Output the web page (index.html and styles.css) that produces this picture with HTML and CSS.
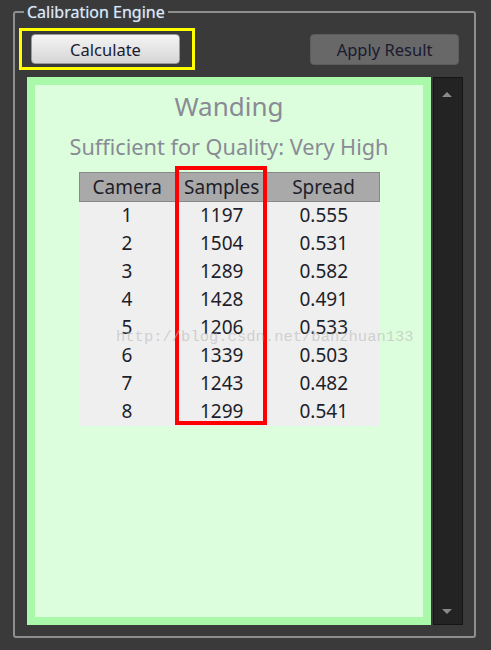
FILE: index.html
```html
<!DOCTYPE html>
<html lang="en">
<head>
    <meta charset="UTF-8">
    <meta name="viewport" content="width=device-width, initial-scale=1.0">
    <title>Calibration Engine</title>
    <link rel="stylesheet" href="styles.css">
</head>
<body>
    <!-- Group box -->
    <fieldset class="group">
        <legend>Calibration Engine</legend>

        <!-- Toolbar -->
        <div class="toolbar">
            <div class="highlight">
                <button class="btn btn-light">Calculate</button>
            </div>
            <button class="btn btn-dark">Apply Result</button>
        </div>

        <!-- Results panel -->
        <div class="panel-row">
            <div class="panel">
                <div class="panel-inner">
                    <div class="title">Wanding</div>
                    <div class="subtitle">Sufficient for Quality: Very High</div>

                    <div class="table-wrap">
                        <table class="results">
                            <thead>
                                <tr>
                                    <th class="col-cam">Camera</th>
                                    <th class="col-samples">Samples</th>
                                    <th class="col-spread">Spread</th>
                                </tr>
                            </thead>
                            <tbody>
                                <tr><td>1</td><td>1197</td><td>0.555</td></tr>
                                <tr><td>2</td><td>1504</td><td>0.531</td></tr>
                                <tr><td>3</td><td>1289</td><td>0.582</td></tr>
                                <tr><td>4</td><td>1428</td><td>0.491</td></tr>
                                <tr><td>5</td><td>1206</td><td>0.533</td></tr>
                                <tr><td>6</td><td>1339</td><td>0.503</td></tr>
                                <tr><td>7</td><td>1243</td><td>0.482</td></tr>
                                <tr><td>8</td><td>1299</td><td>0.541</td></tr>
                            </tbody>
                        </table>
                        <!-- red annotation round the Samples column -->
                        <div class="mark"></div>
                    </div>
                </div>
                <div class="watermark">http://blog.csdn.net/banzhuan133</div>
            </div>

            <!-- Scrollbar -->
            <div class="scrollbar">
                <span class="arrow arrow-up"></span>
                <span class="arrow arrow-down"></span>
            </div>
        </div>
    </fieldset>
</body>
</html>
```
FILE: styles.css
```css
/* Basic Reset */
body, fieldset, legend, table, button {
    margin: 0;
    padding: 0;
    box-sizing: border-box;
}

body {
    width: 491px;
    height: 650px;
    background-color: #3a3a3a;
    font-family: "Noto Sans", sans-serif;
    overflow: hidden;
}

/* Group box */
.group {
    margin: 2px 15px 0 13px;
    height: 636px;
    border: 2px solid #8e8e8e;
    border-radius: 3px;
    padding: 0 0 11px 0;
    display: flex;
    flex-direction: column;
}

.group legend {
    margin-left: 9px;
    padding: 0 3px;
    height: 20px;
    line-height: 20px;
    font-size: 16px;
    color: #dfe8f2;
    text-shadow: 0 0 1px #7fa0c8;
}

/* Toolbar */
.toolbar {
    display: flex;
    justify-content: space-between;
    align-items: center;
    margin-top: 6px;
    padding: 0 15px 0 4px;
}

.highlight {
    border: 3px solid #ffff00;
    padding: 3px 12px 3px 9px;
    display: flex;
}

.btn {
    width: 149px;
    height: 30px;
    border-radius: 4px;
    font-family: "Noto Sans", sans-serif;
    font-size: 16.5px;
    color: #1a1a30;
    cursor: pointer;
}

.btn-light {
    background: linear-gradient(#f4f4f4, #d6d6d6);
    border: 1px solid #9a9a9a;
}

.btn-dark {
    height: 31px;
    background-color: #686868;
    border: 1px solid #5c5c5c;
}

/* Panel */
.panel-row {
    display: flex;
    flex: 1;
    margin: 7px 11px 0 12px;
    gap: 2px;
}

.panel {
    position: relative;
    flex: 1;
    border: 8px solid #aaf8aa;
    background-color: #dcfedc;
}

.panel-inner {
    display: flex;
    flex-direction: column;
    align-items: center;
    padding-top: 6px;
}

.title {
    font-size: 26px;
    line-height: 30px;
    color: #8a8a96;
}

.subtitle {
    font-size: 21.7px;
    line-height: 28px;
    margin-top: 12px;
    color: #8a8a96;
}

/* Table */
.table-wrap {
    position: relative;
    margin-top: 11px;
}

.results {
    width: 301px;
    border-collapse: collapse;
    font-size: 19px;
    line-height: 24px;
    color: #1e1e2a;
}

.results th {
    height: 27px;
    padding: 0 0 1px;
    font-weight: normal;
    background-color: #a9a9a9;
    border-top: 1px solid #888;
    border-bottom: 1px solid #888;
}

.results th:first-child { border-left: 1px solid #888; }
.results th:last-child { border-right: 1px solid #888; }

.results td {
    height: 25px;
    padding: 0 0 3px;
    text-align: center;
    background-color: #efefef;
}

.col-cam { width: 96px; }
.col-samples { width: 94px; }
.col-spread { width: 111px; }

.mark {
    position: absolute;
    left: 96px;
    top: -6px;
    width: 92px;
    height: 259px;
    border: 4px solid #ff0000;
    box-sizing: border-box;
}

.watermark {
    position: absolute;
    left: 81px;
    top: 243px;
    font-family: "Liberation Mono", monospace;
    font-size: 15.5px;
    color: rgba(185, 185, 185, 0.6);
    white-space: nowrap;
}

/* Scrollbar */
.scrollbar {
    position: relative;
    width: 28px;
    background-color: #232323;
    border: 1px solid #151515;
}

.arrow {
    position: absolute;
    left: 8px;
    width: 0;
    height: 0;
    border-left: 5px solid transparent;
    border-right: 5px solid transparent;
}

.arrow-up {
    top: 14px;
    border-bottom: 5px solid #8a8a8a;
}

.arrow-down {
    bottom: 10px;
    border-top: 5px solid #8a8a8a;
}
```
